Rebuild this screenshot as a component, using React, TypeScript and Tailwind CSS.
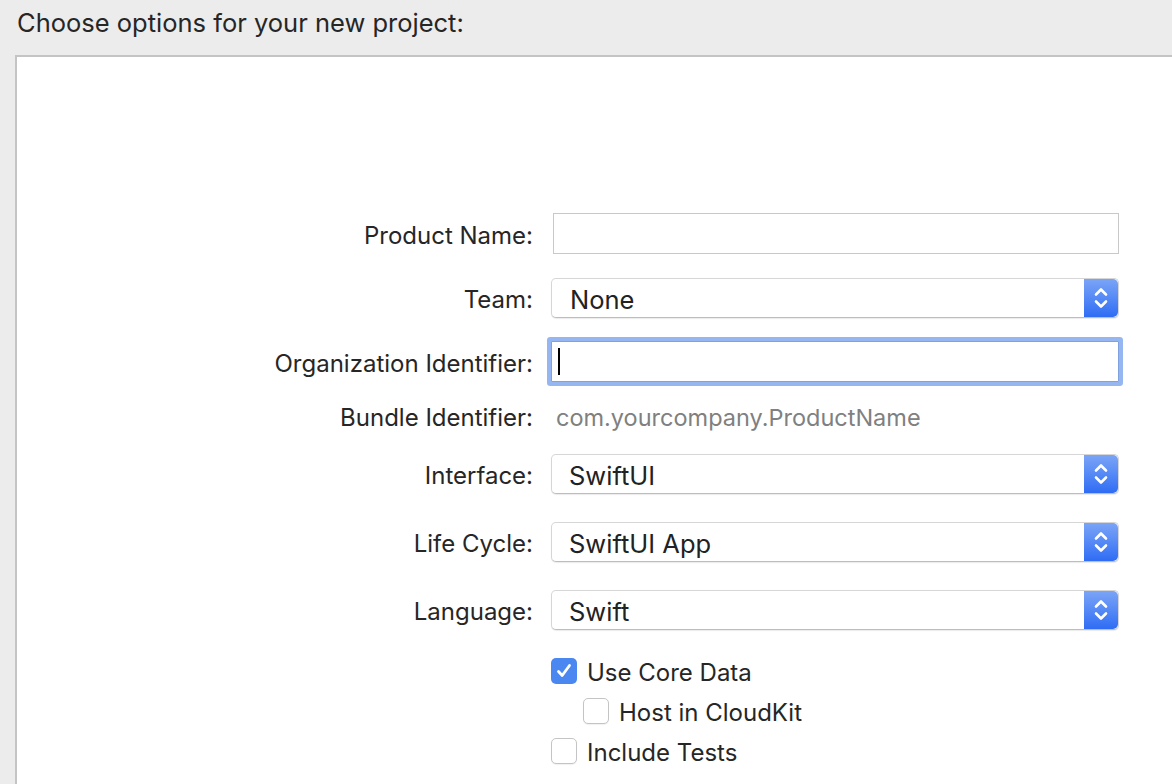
import React from 'react'

function Stepper() {
  return (
    <div className="w-[34px] h-full rounded-r-[5px] bg-gradient-to-b from-[#7ba4f6] to-[#2f6cf4] flex items-center justify-center">
      <svg width="16" height="28" viewBox="0 0 16 28" fill="none">
        <path d="M3 10.5 L8 5.5 L13 10.5" stroke="white" strokeWidth="2.6" strokeLinecap="round" strokeLinejoin="round" />
        <path d="M3 17.5 L8 22.5 L13 17.5" stroke="white" strokeWidth="2.6" strokeLinecap="round" strokeLinejoin="round" />
      </svg>
    </div>
  )
}

function Popup({ value, pad = 'pl-[18px]' }: { value: string; pad?: string }) {
  return (
    <div className="w-[568px] h-[40px] flex items-stretch rounded-[5px] bg-white border border-[#d6d6d6] border-b-[#bdbdbd] shadow-[0_1px_1px_rgba(0,0,0,0.08)]">
      <div className={`flex-1 flex items-center pt-[4px] text-[25.5px] text-[#222] ${pad}`}>{value}</div>
      <Stepper />
    </div>
  )
}

function Checkbox({ checked, label }: { checked?: boolean; label: string }) {
  return (
    <div className="flex items-center gap-[10px] h-[26px]">
      {checked ? (
        <div className="w-[26px] h-[26px] rounded-[5px] bg-[#4b87f1] flex items-center justify-center">
          <svg width="18" height="18" viewBox="0 0 18 18" fill="none">
            <path d="M3.5 9.5 L7.2 13.5 L14.5 3.5" stroke="white" strokeWidth="2.8" strokeLinecap="round" strokeLinejoin="round" />
          </svg>
        </div>
      ) : (
        <div className="w-[26px] h-[26px] rounded-[5px] bg-white border border-[#c4c4c4] shadow-[0_1px_1px_rgba(0,0,0,0.06)]" />
      )}
      <span className="pt-[4px] text-[24px] leading-[26px] text-[#262626]">{label}</span>
    </div>
  )
}

function Row({ label, children, className = '' }: { label?: string; children: React.ReactNode; className?: string }) {
  return (
    <div className={`flex items-center gap-[18px] ${className}`}>
      <div className="w-[516px] pt-[4px] text-right text-[24px] leading-[30px] text-[#262626] shrink-0">{label}</div>
      <div className="w-[568px] shrink-0">{children}</div>
    </div>
  )
}

export default function App() {
  return (
    <div className="w-[1172px] h-[784px] overflow-hidden bg-[#ececec] font-['Inter',sans-serif] text-[#262626]">
      <div className="h-[55px] pl-[17px] pt-[7px] text-[25.5px] leading-[32px]">Choose options for your new project:</div>
      <div className="ml-[15px] w-[1200px] h-[740px] bg-white border-l-2 border-t-2 border-[#c4c4c4] pt-[156px]">
        <Row label="Product Name:">
          <div className="ml-[2px] w-[566px] h-[41px] border border-[#c9c9c9] bg-white" />
        </Row>
        <Row label="Team:" className="mt-[24px]">
          <Popup value="None" />
        </Row>
        <Row label="Organization Identifier:" className="mt-[23px]">
          <div className="w-[568px] h-[41px] border border-[#7fa1de] rounded-[1px] bg-white shadow-[0_0_0_4px_#96b6f2] flex items-center pl-[6px]">
            <div className="w-[2px] h-[27px] bg-black" />
          </div>
        </Row>
        <Row label="Bundle Identifier:" className="mt-[18px] h-[32px]">
          <div className="pl-[5px] pt-[4px] text-[23.5px] text-[#808080]">com.yourcompany.ProductName</div>
        </Row>
        <Row label="Interface:" className="mt-[22px]">
          <Popup value="SwiftUI" pad="pl-[17px]" />
        </Row>
        <Row label="Life Cycle:" className="mt-[28px]">
          <Popup value="SwiftUI App" pad="pl-[17px]" />
        </Row>
        <Row label="Language:" className="mt-[28px]">
          <Popup value="Swift" pad="pl-[17px]" />
        </Row>
        <div className="ml-[534px] mt-[28px] flex flex-col">
          <Checkbox checked label="Use Core Data" />
          <div className="ml-[32px] mt-[14px]">
            <Checkbox label="Host in CloudKit" />
          </div>
          <div className="mt-[14px]">
            <Checkbox label="Include Tests" />
          </div>
        </div>
      </div>
    </div>
  )
}
